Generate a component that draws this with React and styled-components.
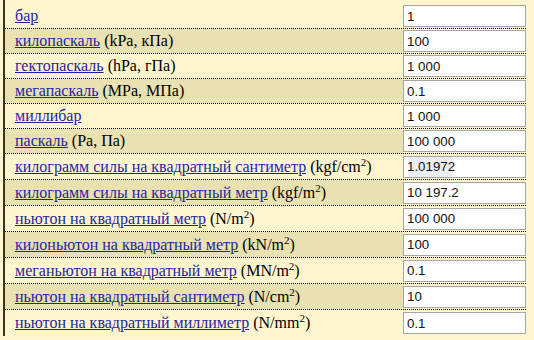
import React from 'react';
import styled, { createGlobalStyle } from 'styled-components';

const Global = createGlobalStyle`
  body {
    margin: 0;
    background: #fff5cf;
    font-family: "Liberation Serif", "Times New Roman", serif;
  }
`

const Frame = styled.div`
  margin-left: 3px;
  width: 523px;
  border-left: 2px solid #3b3320;
  padding-top: 4px;
  min-height: 336px;
  box-sizing: border-box;
`

const Row = styled.div`
  display: grid;
  grid-template-columns: 398px 123px;
  height: ${p => (p.$tall ? 26 : 25)}px;
  box-sizing: border-box;
  border-bottom: ${p => (p.$last ? 'none' : '1px dotted #000')};
`

const Label = styled.div`
  display: flex;
  align-items: center;
  padding-left: 10px;
  background: ${p => (p.$shade ? '#e9e1b2' : 'transparent')};
  font-size: 16px;
  color: #000;
  white-space: nowrap;

  sup {
    font-size: 11px;
    line-height: 0;
  }
`

const Unit = styled.a`
  color: #1f1fa6;
  text-decoration: underline;
  margin-right: 4px;
`

const Cell = styled.div`
  display: flex;
  align-items: center;
`

const Field = styled.input`
  width: 123px;
  height: 22px;
  box-sizing: border-box;
  border: 1px solid #a7a7a2;
  padding: 0 3px;
  font-family: "Liberation Sans", Arial, sans-serif;
  font-size: 13.3px;
  color: #111;
  outline: none;
  background: ${p =>
    p.$mark
      ? 'linear-gradient(to right, #fff 5px, #eceef2 5px, #eceef2 49px, #fff 49px)'
      : '#fff'};
`

const rows = [
  { name: 'бар', value: '1' },
  { name: 'килопаскаль', extra: '(kPa, кПа)', value: '100' },
  { name: 'гектопаскаль', extra: '(hPa, гПа)', value: '1 000' },
  { name: 'мегапаскаль', extra: '(MPa, МПа)', value: '0.1' },
  { name: 'миллибар', value: '1 000' },
  { name: 'паскаль', extra: '(Pa, Па)', value: '100 000' },
  { name: 'килограмм силы на квадратный сантиметр', extra: 'kgf/cm', sup: true, value: '1.01972', mark: true },
  { name: 'килограмм силы на квадратный метр', extra: 'kgf/m', sup: true, value: '10 197.2' },
  { name: 'ньютон на квадратный метр', extra: 'N/m', sup: true, value: '100 000' },
  { name: 'килоньютон на квадратный метр', extra: 'kN/m', sup: true, value: '100' },
  { name: 'меганьютон на квадратный метр', extra: 'MN/m', sup: true, value: '0.1' },
  { name: 'ньютон на квадратный сантиметр', extra: 'N/cm', sup: true, value: '10' },
  { name: 'ньютон на квадратный миллиметр', extra: 'N/mm', sup: true, value: '0.1' },
];

const App = () => {
  return (
    <>
      <Global />
      <Frame>
        {rows.map((r, i) => (
          <Row key={r.name} $tall={r.sup} $last={i === rows.length - 1}>
            <Label $shade={i % 2 === 1}>
              <Unit href="#">{r.name}</Unit>
              {r.sup ? (
                <span>({r.extra}<sup>2</sup>)</span>
              ) : (
                r.extra && <span>{r.extra}</span>
              )}
            </Label>
            <Cell>
              <Field readOnly defaultValue={r.value} $mark={r.mark} />
            </Cell>
          </Row>
        ))}
      </Frame>
    </>
  );
};

export default App;
